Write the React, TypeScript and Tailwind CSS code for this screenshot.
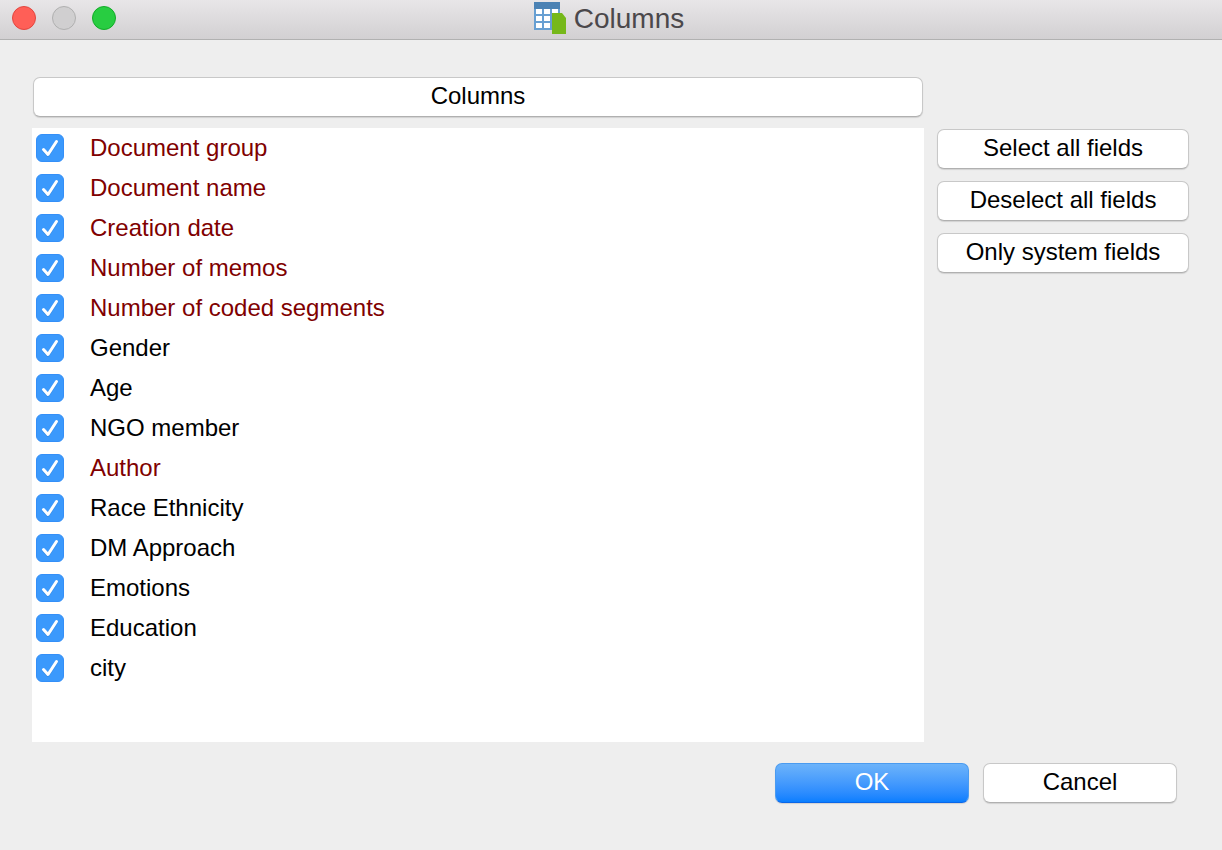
import React, { useState } from "react"
import clsx from "clsx"

interface Field {
  id: string;
  label: string;
  system: boolean;
}

const FIELDS: Field[] = [
  { id: "document-group", label: "Document group", system: true },
  { id: "document-name", label: "Document name", system: true },
  { id: "creation-date", label: "Creation date", system: true },
  { id: "memos", label: "Number of memos", system: true },
  { id: "coded-segments", label: "Number of coded segments", system: true },
  { id: "gender", label: "Gender", system: false },
  { id: "age", label: "Age", system: false },
  { id: "ngo-member", label: "NGO member", system: false },
  { id: "author", label: "Author", system: true },
  { id: "race-ethnicity", label: "Race Ethnicity", system: false },
  { id: "dm-approach", label: "DM Approach", system: false },
  { id: "emotions", label: "Emotions", system: false },
  { id: "education", label: "Education", system: false },
  { id: "city", label: "city", system: false },
];

const ALL_IDS = FIELDS.map(field => field.id);

function TableIcon() {
  return (
    <svg width="32" height="32" viewBox="0 0 32 32" aria-hidden="true">
      <rect width="26" height="28" fill="#679fd2" />
      <rect width="26" height="7" fill="#4b82b4" />
      <g fill="#fff">
        {[7, 14, 21].map(y =>
          [2, 10, 18].map(x => <rect key={`${x}-${y}`} x={x} y={y} width="6" height="5" />)
        )}
      </g>
      <path d="M18 11h10l4 5v16H18z" fill="#76b81a" />
    </svg>
  );
}

function TitleBar() {
  return (
    <header className="grid h-10 grid-cols-[1fr_auto_1fr] items-start border-b border-[#b1b1b1] bg-linear-to-b from-[#e8e6e8] to-[#d2d0d2] pr-4 pl-3">
      <div className="flex gap-4 pt-1.5">
        <button aria-label="Close" className="size-6 rounded-full border border-[#e2463f] bg-[#ff5f57]" />
        <button aria-label="Minimize" disabled className="size-6 rounded-full border border-[#b0b0b0] bg-[#d0cfd0]" />
        <button aria-label="Zoom" className="size-6 rounded-full border border-[#12ac28] bg-[#28cd41]" />
      </div>
      <div className="flex items-start gap-2 pt-0.5">
        <TableIcon />
        <h1 className="text-[28px] leading-[34px] text-[#4b484b]">Columns</h1>
      </div>
    </header>
  );
}

interface PushButtonProps {
  children: React.ReactNode;
  className?: string;
  onClick?: () => void;
}

function PushButton({ children, className, onClick }: PushButtonProps) {
  return (
    <button
      type="button"
      onClick={onClick}
      className={clsx(
        "h-10 rounded-[7px] border border-[#c8c8c8] border-b-[#b0b0b0] bg-white pb-0.5 leading-9 shadow-[0_1px_1px_rgba(0,0,0,0.12)] active:bg-gray-100",
        className
      )}
    >
      {children}
    </button>
  );
}

interface FieldRowProps {
  field: Field;
  checked: boolean;
  onToggle: () => void;
}

function FieldRow({ field, checked, onToggle }: FieldRowProps) {
  return (
    <li className="flex h-10 items-center pl-1">
      <span className="grid size-7 shrink-0">
        <input
          id={field.id}
          type="checkbox"
          checked={checked}
          onChange={onToggle}
          className="peer col-start-1 row-start-1 size-7 appearance-none rounded-md border border-[#c0c0c0] bg-white checked:border-[#348ff8] checked:bg-[#3b99fc]"
        />
        <svg
          viewBox="0 0 28 28"
          aria-hidden="true"
          className="pointer-events-none invisible col-start-1 row-start-1 size-7 peer-checked:visible"
        >
          <path d="M7.5 16.5l4.5 5L20.5 8.5" fill="none" stroke="#2c7fd6" strokeWidth="3" strokeLinecap="round" strokeLinejoin="round" opacity="0.5" />
          <path d="M7.5 15.5l4.5 5L20.5 7.5" fill="none" stroke="#fff" strokeWidth="3" strokeLinecap="round" strokeLinejoin="round" />
        </svg>
      </span>
      <label
        htmlFor={field.id}
        className={clsx("flex-1 pl-6.5 leading-10", field.system ? "text-[#800000]" : "text-black")}
      >
        {field.label}
      </label>
    </li>
  );
}

export default function App() {
  const [selected, setSelected] = useState<string[]>(ALL_IDS);

  const toggle = (id: string) => {
    setSelected(prev => (prev.includes(id) ? prev.filter(item => item !== id) : [...prev, id]));
  };

  return (
    <div className="flex min-h-screen flex-col bg-[#eeeeee] font-['Liberation_Sans',Arial,sans-serif] text-2xl text-black">
      <TitleBar />

      <main className="flex flex-1 gap-[13px] pt-9 pr-[33px] pl-8">
        <div className="flex flex-1 flex-col gap-[11px] pt-px">
          <PushButton className="mx-px">Columns</PushButton>
          <ul className="flex-1 bg-white">
            {FIELDS.map(field => (
              <FieldRow
                key={field.id}
                field={field}
                checked={selected.includes(field.id)}
                onToggle={() => toggle(field.id)}
              />
            ))}
          </ul>
        </div>

        <div className="flex w-[252px] flex-col gap-3 pt-[53px]">
          <PushButton onClick={() => setSelected(ALL_IDS)}>Select all fields</PushButton>
          <PushButton onClick={() => setSelected([])}>Deselect all fields</PushButton>
          <PushButton onClick={() => setSelected(FIELDS.filter(field => field.system).map(field => field.id))}>
            Only system fields
          </PushButton>
        </div>
      </main>

      <footer className="flex justify-end gap-3.5 pt-[21px] pr-[45px] pb-[47px]">
        <button
          type="button"
          className="h-10 w-[194px] rounded-[7px] border border-[#4a9bf0] border-b-[#0a66e8] bg-linear-to-b from-[#6cb3fa] to-[#077eff] pb-0.5 leading-9 text-white shadow-[0_1px_1px_rgba(0,0,0,0.12)]"
        >
          OK
        </button>
        <PushButton className="w-[194px]">Cancel</PushButton>
      </footer>
    </div>
  );
}
